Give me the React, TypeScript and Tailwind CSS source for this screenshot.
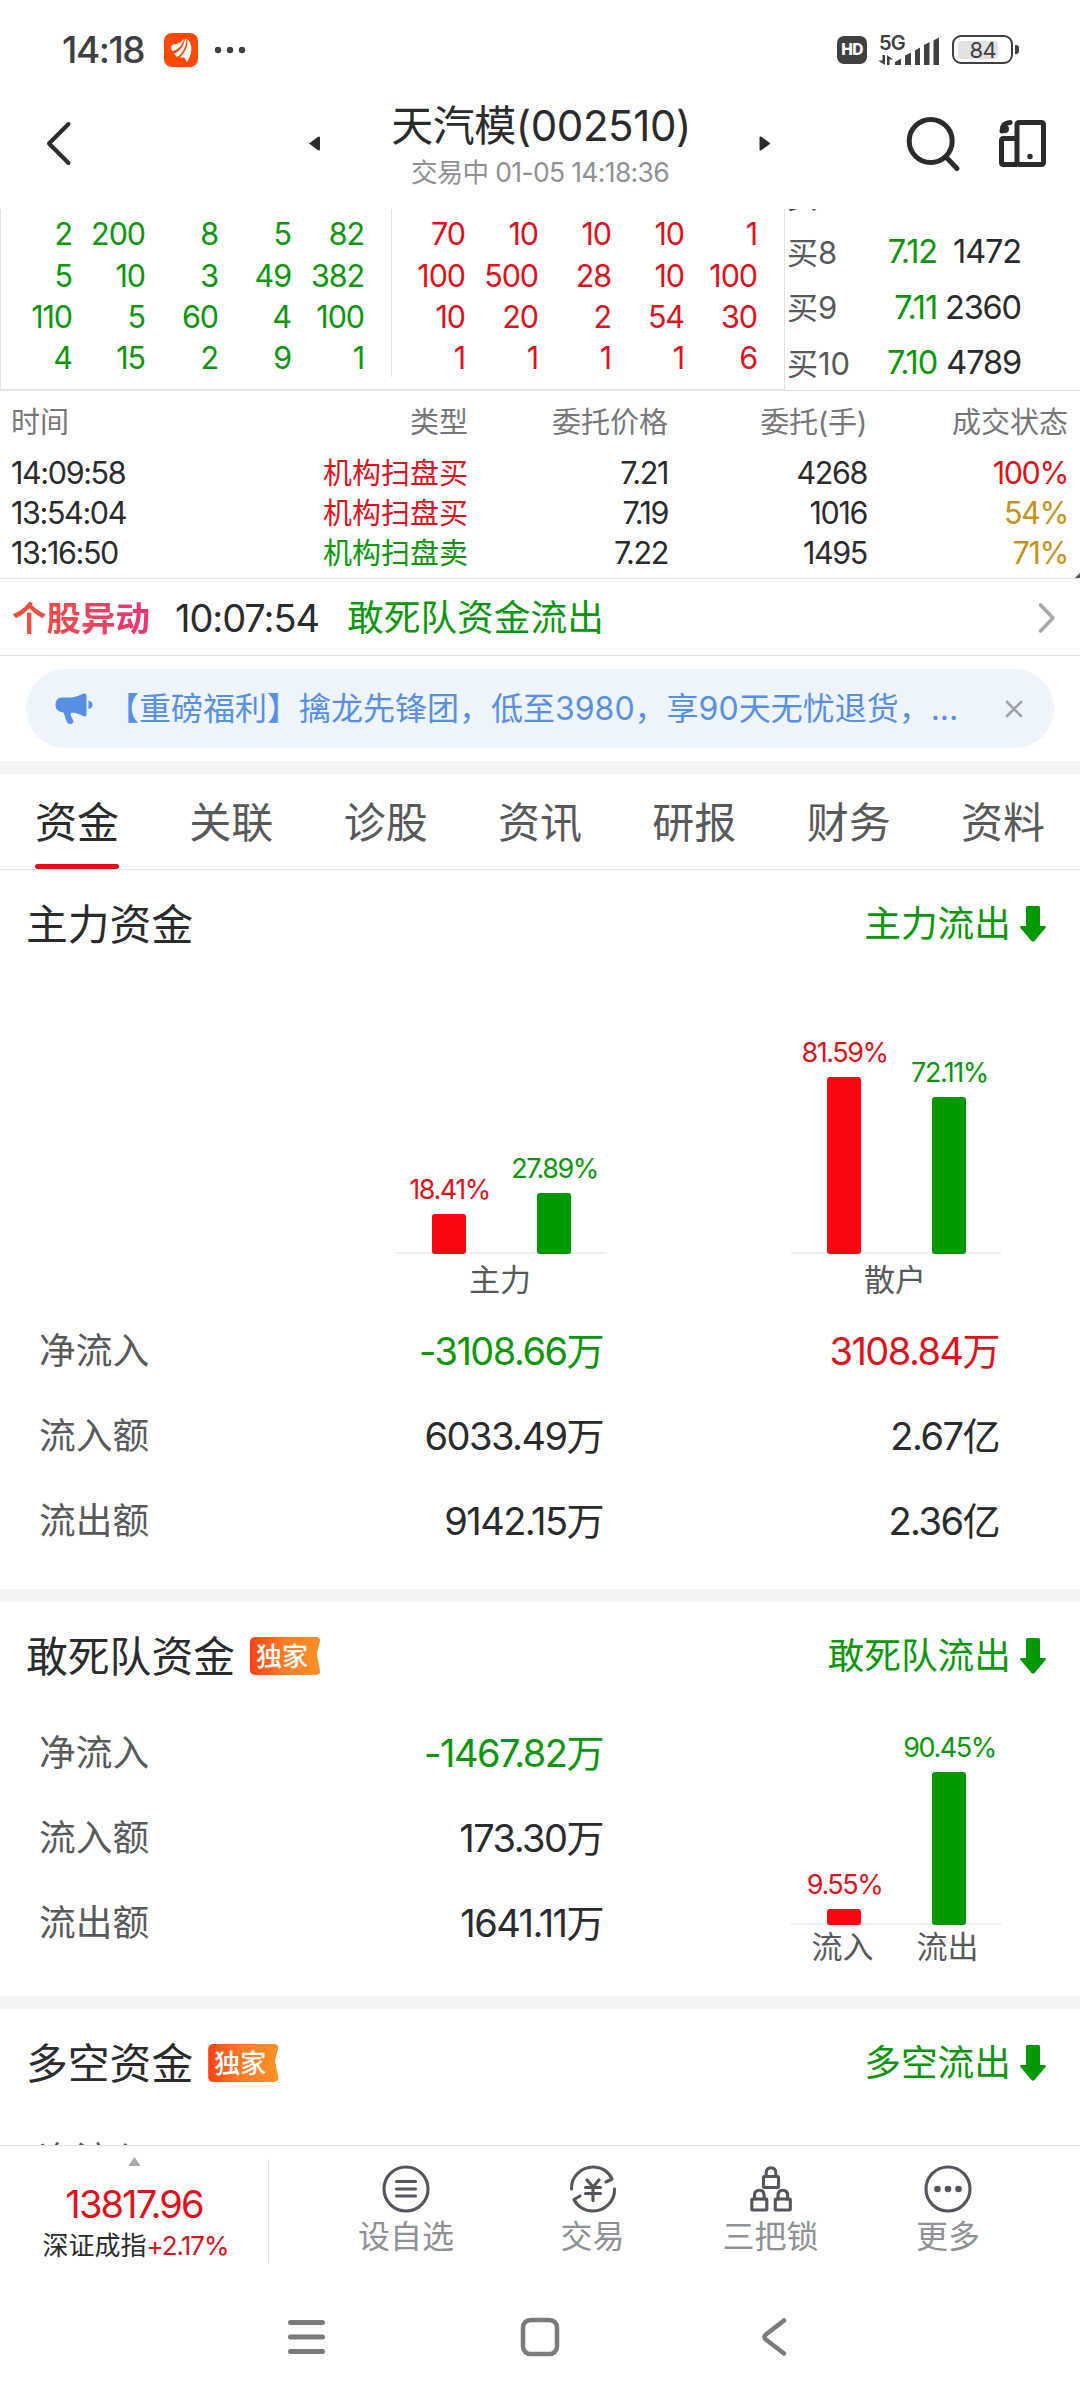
import type { ReactNode } from 'react'

type Tone = 'up' | 'down' | 'plain' | 'warn'

const TONES: Record<Tone, string> = {
  up: 'text-[#df121c]',
  down: 'text-[#0a970c]',
  plain: 'text-[#2a2b2d]',
  warn: 'text-[#c6921a]',
}

const SELL_QUEUE = [
  [2, 200, 8, 5, 82],
  [5, 10, 3, 49, 382],
  [110, 5, 60, 4, 100],
  [4, 15, 2, 9, 1],
]

const BUY_QUEUE = [
  [70, 10, 10, 10, 1],
  [100, 500, 28, 10, 100],
  [10, 20, 2, 54, 30],
  [1, 1, 1, 1, 6],
]

const BIDS = [
  { label: '买7', price: '', volume: '' },
  { label: '买8', price: '7.12', volume: '1472' },
  { label: '买9', price: '7.11', volume: '2360' },
  { label: '买10', price: '7.10', volume: '4789' },
]

const ORDERS: { time: string; type: string; price: string; volume: string; state: string; typeTone: Tone; stateTone: Tone }[] = [
  { time: '14:09:58', type: '机构扫盘买', price: '7.21', volume: '4268', state: '100%', typeTone: 'up', stateTone: 'up' },
  { time: '13:54:04', type: '机构扫盘买', price: '7.19', volume: '1016', state: '54%', typeTone: 'up', stateTone: 'warn' },
  { time: '13:16:50', type: '机构扫盘卖', price: '7.22', volume: '1495', state: '71%', typeTone: 'down', stateTone: 'warn' },
]

const TABS = ['资金', '关联', '诊股', '资讯', '研报', '财务', '资料']

//// STATUS BAR (system clock, signal, battery)
const StatusBar = () => (
  <div className="flex h-[98px] items-center pl-[62px] pr-[61px] pt-[1px] text-[#404040]">
    <span className="w-[102px] text-[37px] font-medium tracking-[-0.04em]">14:18</span>
    <svg width="34" height="34" viewBox="0 0 34 34">
      <rect width="34" height="34" rx="8" fill="#ff4800" />
      <g fill="#fff">
        <path d="M7 14 Q7 11.500 10 11.500 Q15 11 20 6 C18 13 14 17 8 18 Z" />
        <path d="M21 6 H22.500 C22 15 18 21 13 24 L10 20.500 C16 18 20 13 21 6 Z" />
        <path d="M23.500 6 C28.500 11 29 20 23 29 L20.500 24.500 L15.500 24.500 C21 20 24 13 23.500 6 Z" />
      </g>
    </svg>
    <svg className="ml-[16px]" width="32" height="8" viewBox="0 0 32 8" fill="#404040">
      <circle cx="4" cy="4" r="3.200" />
      <circle cx="16" cy="4" r="3.200" />
      <circle cx="28" cy="4" r="3.200" />
    </svg>
    <div className="ml-auto flex items-center">
      <span className="flex h-[28px] w-[30px] items-center justify-center rounded-[7px] bg-[#404040] text-[15.500px] font-extrabold tracking-[-0.04em] text-white">HD</span>
      <div className="relative ml-[11px] h-[32px] w-[62px]">
        <span className="absolute -top-[1px] left-[1px] text-[20px] font-semibold tracking-[-0.04em]">5G</span>
        <svg className="absolute left-0 top-0" width="62" height="32" viewBox="0 0 62 32" fill="#404040">
          <path d="M4.500 21 H7 V31 L0 26.500 H4.500 Z M9 21 L15 25.500 H11.500 V31 H9 Z" />
          <path d="M17 31 V28 L23 24.500 V31 Z M27 31 V21.500 L33 18.500 V31 Z M37 31 V16.500 L42 13.500 V31 Z M46 31 V11 L51.500 8 V31 Z M55.500 31 V6.500 L61 3.500 V31 Z" />
        </svg>
      </div>
      <div className="ml-[12px] flex h-[29px] w-[61px] items-center rounded-[9px] border-[2.500px] border-[#404040] p-[4px]">
        <div className="flex h-[18px] w-[40px] items-center justify-end rounded-[4px] bg-[#e2e2e2] pr-[2px] text-[22px] tracking-[-0.03em]">84</div>
      </div>
      <span className="ml-[2px] h-[9px] w-[4px] rounded-r-[3px] bg-[#404040]" />
    </div>
  </div>
)

const Header = () => (
  <div className="flex h-[111px] items-start">
    <svg className="ml-[44px] mt-[22px]" width="30" height="48" viewBox="0 0 30 48" fill="none" stroke="#2a2b2d" strokeWidth="4" strokeLinecap="round" strokeLinejoin="round">
      <path d="M24.500 4 L5 23.500 L24.500 43" />
    </svg>
    <svg className="ml-[235px] mt-[38px]" width="12" height="15" viewBox="0 0 12 15" fill="#2a2b2d">
      <path d="M0 7.500 L9.500 .5 Q11 0 11 2 V13 Q11 15 9.500 14.500 Z" />
    </svg>
    <div className="flex w-[438px] flex-col items-center">
      <h1 className="mt-[7px] whitespace-nowrap pl-[2px] text-[42px] tracking-[-0.01em] text-[#2a2b2d]">天汽模(002510)</h1>
      <p className="mt-[12px] whitespace-nowrap text-[26.500px] tracking-[-0.025em] text-[#8f9195]">交易中 01-05 14:18:36</p>
    </div>
    <svg className="mt-[38px]" width="12" height="15" viewBox="0 0 12 15" fill="#2a2b2d">
      <path d="M11.500 7.500 L2 .5 Q.5 0 .5 2 V13 Q.5 15 2 14.500 Z" />
    </svg>
    <svg className="ml-[134px] mt-[18px]" width="58" height="58" viewBox="0 0 58 58" fill="none" stroke="#2a2b2d" strokeWidth="5" strokeLinecap="round">
      <circle cx="25.700" cy="25" r="21.500" />
      <path d="M41 41 L52 52.500" />
    </svg>
    <svg className="ml-[35px] mt-[20px]" width="50" height="52" viewBox="0 0 50 52" fill="none" stroke="#2a2b2d" strokeWidth="5" strokeLinejoin="round">
      <rect x="19" y="4.500" width="26.500" height="42" rx="2" />
      <path d="M19 20.500 H5.500 Q3.500 20.500 3.500 22.500 V44.500 Q3.500 46.500 5.500 46.500 H19" />
      <path d="M4 13 Q4 5 12 4.500" strokeLinecap="round" />
      <circle cx="7" cy="11" r="2.500" fill="#2a2b2d" strokeWidth="3" />
      <circle cx="32" cy="38.500" r="2.700" fill="#2a2b2d" stroke="none" />
    </svg>
  </div>
)

const Queue = ({ rows, tone }: { rows: number[][]; tone: Tone }) => (
  <div className={`grid grid-cols-[repeat(5,73px)] auto-rows-[41.200px] content-start pt-[5px] text-right text-[30.500px] tracking-[-0.035em] ${TONES[tone]}`}>
    {rows.flat().map((n, i) => (
      <span key={i} className="flex items-center justify-end pr-[2px]">{n}</span>
    ))}
  </div>
)

const OrderBook = () => (
  <div className="flex h-[182px] border-b border-[#e2e2e2]">
    <div className="flex h-[181px] w-[785px] border-b border-l border-r border-[#e2e2e2]">
      <div className="h-[168px] w-[391px] border-r border-[#e2e2e2]">
        <Queue rows={SELL_QUEUE} tone="down" />
      </div>
      <div className="pl-[2px]">
        <Queue rows={BUY_QUEUE} tone="up" />
      </div>
    </div>
    {/* top bid is scrolled almost out of view */}
    <div className="flex flex-1 flex-col justify-end overflow-hidden text-[32.500px] tracking-[-0.035em]">
      <div className="-mb-[1px]">
        {BIDS.map((bid) => (
          <div key={bid.label} className="flex h-[55.500px] items-center pl-[2px]">
            <span className="w-[70px] whitespace-nowrap text-[31px] tracking-normal text-[#58595b]">{bid.label}</span>
            <span className={`w-[80px] text-right ${TONES.down}`}>{bid.price}</span>
            <span className={`w-[84px] text-right ${TONES.plain}`}>{bid.volume}</span>
          </div>
        ))}
      </div>
    </div>
  </div>
)

const ORDER_COLS = 'grid grid-cols-[168px_289px_200px_199px_201px] items-center pl-[11px]'

const OrderTable = () => (
  <div className="relative h-[188px] border-b border-[#e2e2e2]">
    <div className={`${ORDER_COLS} h-[62px] text-[29px] text-[#777779]`}>
      <span>时间</span>
      <span className="text-right">类型</span>
      <span className="text-right">委托价格</span>
      <span className="text-right tracking-[-0.01em]">委托(手)</span>
      <span className="text-right">成交状态</span>
    </div>
    {ORDERS.map((o) => (
      <div key={o.time} className={`${ORDER_COLS} h-[40px] text-[30.500px] tracking-[-0.045em] text-[#2a2b2d]`}>
        <span>{o.time}</span>
        <span className={`pt-[1px] text-right text-[29px] tracking-normal ${TONES[o.typeTone]}`}>{o.type}</span>
        <span className="text-right">{o.price}</span>
        <span className="text-right">{o.volume}</span>
        <span className={`text-right ${TONES[o.stateTone]}`}>{o.state}</span>
      </div>
    ))}
    <svg className="absolute bottom-0 right-0" width="5" height="5" viewBox="0 0 5 5"><path d="M0 5 L5 0 V5 Z" fill="#555" /></svg>
  </div>
)

const AlertRow = () => (
  <div className="flex h-[77px] items-center border-b border-[#e2e2e2] pl-[12px] pr-[24px]">
    <span className="bg-gradient-to-r from-[#f0522e] to-[#ea3377] bg-clip-text pt-[3px] text-[34.500px] leading-[48px] font-bold text-transparent">个股异动</span>
    <span className="ml-[25px] w-[172px] pt-[2px] text-[38px] tracking-[-0.028em] text-[#2a2b2d]">10:07:54</span>
    <span className={`pt-[3px] text-[36.700px] ${TONES.down}`}>敢死队资金流出</span>
    <svg className="ml-auto mt-[1px]" width="20" height="34" viewBox="0 0 20 34" fill="none" stroke="#a8a8a8" strokeWidth="3.600" strokeLinecap="round" strokeLinejoin="round">
      <path d="M4.500 4 L17 17 L4.500 30" />
    </svg>
  </div>
)

const Notice = () => (
  <div className="px-[26px] py-[13px]">
    <div className="flex h-[79px] items-center rounded-full bg-[#edf4fc] pl-[29px] pr-[31px]">
      <svg width="38" height="32" viewBox="0 0 38 32" fill="#568fe4">
        <path d="M7 4.500 H17 Q23 3.500 28 .8 Q31.500 -.5 31.500 3 V21 Q31.500 24.500 28 23 Q24 20.500 17 19.500 Q15 20 16 23 L18.500 28 Q18 31.500 15 31 Q12.500 31 11.500 28 L8.500 19.500 Q.5 19 .5 12 Q.5 4.500 7 4.500 Z" />
        <path d="M33.500 7.500 Q37.500 8.500 37.500 12 Q37.500 15 33.500 16 Z" />
      </svg>
      <span className="ml-[14px] whitespace-nowrap text-[32px] text-[#568fe4]">【重磅福利】擒龙先锋团，低至3980，享90天无忧退货，...</span>
      <svg className="ml-auto" width="18" height="18" viewBox="0 0 18 18" stroke="#a0a2a6" strokeWidth="2.600" strokeLinecap="round">
        <path d="M2 2 L16 16 M16 2 L2 16" />
      </svg>
    </div>
  </div>
)

const Tabs = () => (
  <div className="flex h-[96px] justify-between border-b border-[#e2e2e2] px-[35px]">
    {TABS.map((tab, i) => (
      <div key={tab} className={`flex h-[95px] w-[84px] flex-col items-center text-[42px] ${i === 0 ? 'text-[#2a2b2d]' : 'text-[#58595b]'}`}>
        <span className="flex h-[90px] items-center pt-[7px]">{tab}</span>
        {i === 0 && <span className="h-[5px] w-full rounded-full bg-[#eb0c1c]" />}
      </div>
    ))}
  </div>
)

const Gap = () => <div className="h-[13px] bg-[#f4f4f4]" />

const SectionTitle = ({ title, flow, exclusive }: { title: string; flow: string; exclusive?: boolean }) => (
  <div className="flex h-[108px] items-center pl-[26px] pr-[34px]">
    <h2 className="pt-[3px] text-[41.800px] text-[#2a2b2d]">{title}</h2>
    {exclusive && (
      <span className="ml-[15px] flex h-[38px] w-[71px] items-center rounded-[5px] bg-gradient-to-r from-[#ff4014] via-[#ff7d28] to-[#fb9024] pl-[6px] pt-[1px] text-[26px] font-medium text-white [clip-path:polygon(0_0,100%_0,94%_45%,100%_100%,0_100%)]">独家</span>
    )}
    <span className={`ml-auto pt-[1px] text-[36.700px] ${TONES.down}`}>{flow}</span>
    <svg className="ml-[9px]" width="26" height="36" viewBox="0 0 26 36" fill="#009900">
      <path d="M7.500 0 H18.500 Q20 0 20 1.500 V20 H25 Q26.500 20.500 25.500 22 L14.500 35 Q13 36.500 11.500 35 L.5 22 Q-.5 20.500 1 20 H6 V1.500 Q6 0 7.500 0 Z" />
    </svg>
  </div>
)

const Bar = ({ value, height, tone }: { value: string; height: number; tone: 'up' | 'down' }) => (
  <div className="flex w-[105px] flex-col items-center justify-end">
    <span className={`mb-[11px] pl-[2px] text-[27px] tracking-[-0.055em] ${TONES[tone]}`}>{value}</span>
    <div className={`w-[34px] rounded-[3px] ${tone === 'up' ? 'bg-[#fb0511]' : 'bg-[#009900]'}`} style={{ height }} />
  </div>
)

const Bars = ({ children }: { children: ReactNode }) => (
  <div className="flex w-[210px] items-end bg-[linear-gradient(#eeeeee,#eeeeee)] bg-[length:100%_2px] bg-bottom bg-no-repeat">{children}</div>
)

const StatRow = ({ label, main, retail, tone = 'plain', retailTone = 'plain' }: { label: string; main?: string; retail?: string; tone?: Tone; retailTone?: Tone }) => (
  <div className="flex h-[85px] items-center pl-[39px] text-[38px] tracking-[-0.04em]">
    <span className="w-[165px] pt-[1px] text-[36.700px] tracking-normal text-[#58595b]">{label}</span>
    <span className={`w-[399px] text-right ${TONES[tone]}`}>{main}</span>
    {retail && <span className={`w-[396px] text-right ${TONES[retailTone]}`}>{retail}</span>}
  </div>
)

const MainFunds = () => (
  <section className="h-[719px]">
    <SectionTitle title="主力资金" flow="主力流出" />
    <div className="flex h-[276px] items-end gap-[185px] pl-[396px]">
      <Bars>
        <Bar value="18.41%" height={40} tone="up" />
        <Bar value="27.89%" height={61} tone="down" />
      </Bars>
      <Bars>
        <Bar value="81.59%" height={177} tone="up" />
        <Bar value="72.11%" height={157} tone="down" />
      </Bars>
    </div>
    <div className="flex h-[54px] items-center gap-[185px] pl-[395px] pb-[3px] text-center text-[31px] text-[#58595b]">
      <span className="w-[210px]">主力</span>
      <span className="w-[210px]">散户</span>
    </div>
    <StatRow label="净流入" main="-3108.66万" retail="3108.84万" tone="down" retailTone="up" />
    <StatRow label="流入额" main="6033.49万" retail="2.67亿" />
    <StatRow label="流出额" main="9142.15万" retail="2.36亿" />
  </section>
)

const SquadFunds = () => (
  <section className="h-[394px]">
    <SectionTitle title="敢死队资金" flow="敢死队流出" exclusive />
    <div className="flex">
      <div className="w-[791px]">
        <StatRow label="净流入" main="-1467.82万" tone="down" />
        <StatRow label="流入额" main="173.30万" />
        <StatRow label="流出额" main="1641.11万" />
      </div>
      <div>
        <div className="flex h-[215px] items-end">
          <Bars>
            <Bar value="9.55%" height={16} tone="up" />
            <Bar value="90.45%" height={153} tone="down" />
          </Bars>
        </div>
        <div className="-ml-[1px] flex h-[43px] items-center text-center text-[31px] text-[#58595b]">
          <span className="w-[105px]">流入</span>
          <span className="w-[105px]">流出</span>
        </div>
      </div>
    </div>
  </section>
)

const LongShortFunds = () => (
  <section className="h-[136px] overflow-hidden">
    <SectionTitle title="多空资金" flow="多空流出" exclusive />
    <StatRow label="净流入" />
  </section>
)

const Lock = ({ x, y }: { x: number; y: number }) => (
  <g transform={`translate(${x} ${y})`}>
    <rect x="1.300" y="10" width="15" height="11" rx=".8" />
    <path d="M4 10 V6.500 Q4 1.300 8.800 1.300 Q13.600 1.300 13.600 6.500 V10" />
  </g>
)

const Action = ({ label, width, children }: { label: string; width: string; children: ReactNode }) => (
  <div className={`flex flex-col items-center ${width}`}>
    <svg className="mt-[18px]" width="50" height="50" viewBox="0 0 50 50" fill="none" stroke="#55555d" strokeWidth="3.100" strokeLinecap="round" strokeLinejoin="round">
      {children}
    </svg>
    <span className="mt-[7px] text-[32px] text-[#8f9195]">{label}</span>
  </div>
)

const BottomBar = () => (
  <div className="flex h-[128px] border-t border-[#e2e2e2]">
    <div className="flex w-[268px] flex-col items-center">
      <svg className="mt-[11px]" width="11" height="9" viewBox="0 0 11 9" fill="#a9aaac"><path d="M5.500 0 L11 8 V9 H0 V8 Z" /></svg>
      <span className={`mt-[19px] text-[38px] tracking-[-0.05em] ${TONES.up}`}>13817.96</span>
      <span className="mt-[10px] whitespace-nowrap pl-[3px] text-[26px] text-[#2a2b2d]">
        深证成指<span className={`tracking-[-0.04em] ${TONES.up}`}>+2.17%</span>
      </span>
    </div>
    <div className="mt-[13px] h-[104px] w-px bg-[#e2e2e2]" />
    <div className="flex pl-[44px]">
      <Action label="设自选" width="w-[186px]">
        <circle cx="25" cy="25" r="22" />
        <path d="M15.500 17.500 H34.500 M15.500 25 H34.500 M15.500 32 H34.500" />
      </Action>
      <Action label="交易" width="w-[187px]">
        <path d="M3.500 25 C3 13 13 3 25 3 C34 3 41 8 44 15 L38 18" />
        <path d="M46.500 25 C47 37 37 47 25 47 C16 47 9 42 6 35.500 L12 32" />
        <path d="M19 16 L25 23 L31 16 M25 23 V36.500 M17.500 23.500 H32.500 M17.500 29.500 H32.500" />
      </Action>
      <Action label="三把锁" width="w-[169px]">
        <Lock x={16.2} y={2.5} />
        <Lock x={4.5} y={25} />
        <Lock x={28} y={25} />
      </Action>
      <Action label="更多" width="w-[186px]">
        <circle cx="25" cy="25" r="22" />
        <g fill="#55555d" stroke="none">
          <circle cx="14.500" cy="25" r="3.300" />
          <circle cx="25" cy="25" r="3.300" />
          <circle cx="35.500" cy="25" r="3.300" />
        </g>
      </Action>
    </div>
  </div>
)

const SystemNav = () => (
  <div className="flex h-[127px] items-center pl-[286px]">
    <svg width="41" height="42" viewBox="0 0 41 42" stroke="#7b7b7b" strokeWidth="5" strokeLinecap="round">
      <path d="M4.500 6.500 H36.500 M4.500 21 H36.500 M4.500 35.500 H36.500" />
    </svg>
    <svg className="ml-[192px]" width="42" height="42" viewBox="0 0 42 42" fill="none" stroke="#7b7b7b" strokeWidth="4.500">
      <rect x="4" y="4" width="34" height="34" rx="7.500" />
    </svg>
    <svg className="ml-[198px]" width="30" height="42" viewBox="0 0 30 42" fill="none" stroke="#7b7b7b" strokeWidth="4.500" strokeLinecap="round" strokeLinejoin="round">
      <path d="M25 4.500 L7.500 18 Q3.500 21 7.500 24 L25 37.500" />
    </svg>
  </div>
)

const App = () => {
  return (
    <main className="h-[2400px] w-[1080px] overflow-hidden bg-white font-['Inter','Noto_Sans_CJK_SC',sans-serif] leading-none">
      <StatusBar />
      <Header />
      <OrderBook />
      <OrderTable />
      <AlertRow />
      <Notice />
      <Gap />
      <Tabs />
      <MainFunds />
      <Gap />
      <SquadFunds />
      <Gap />
      <LongShortFunds />
      <BottomBar />
      <SystemNav />
    </main>
  )
}

export default App
